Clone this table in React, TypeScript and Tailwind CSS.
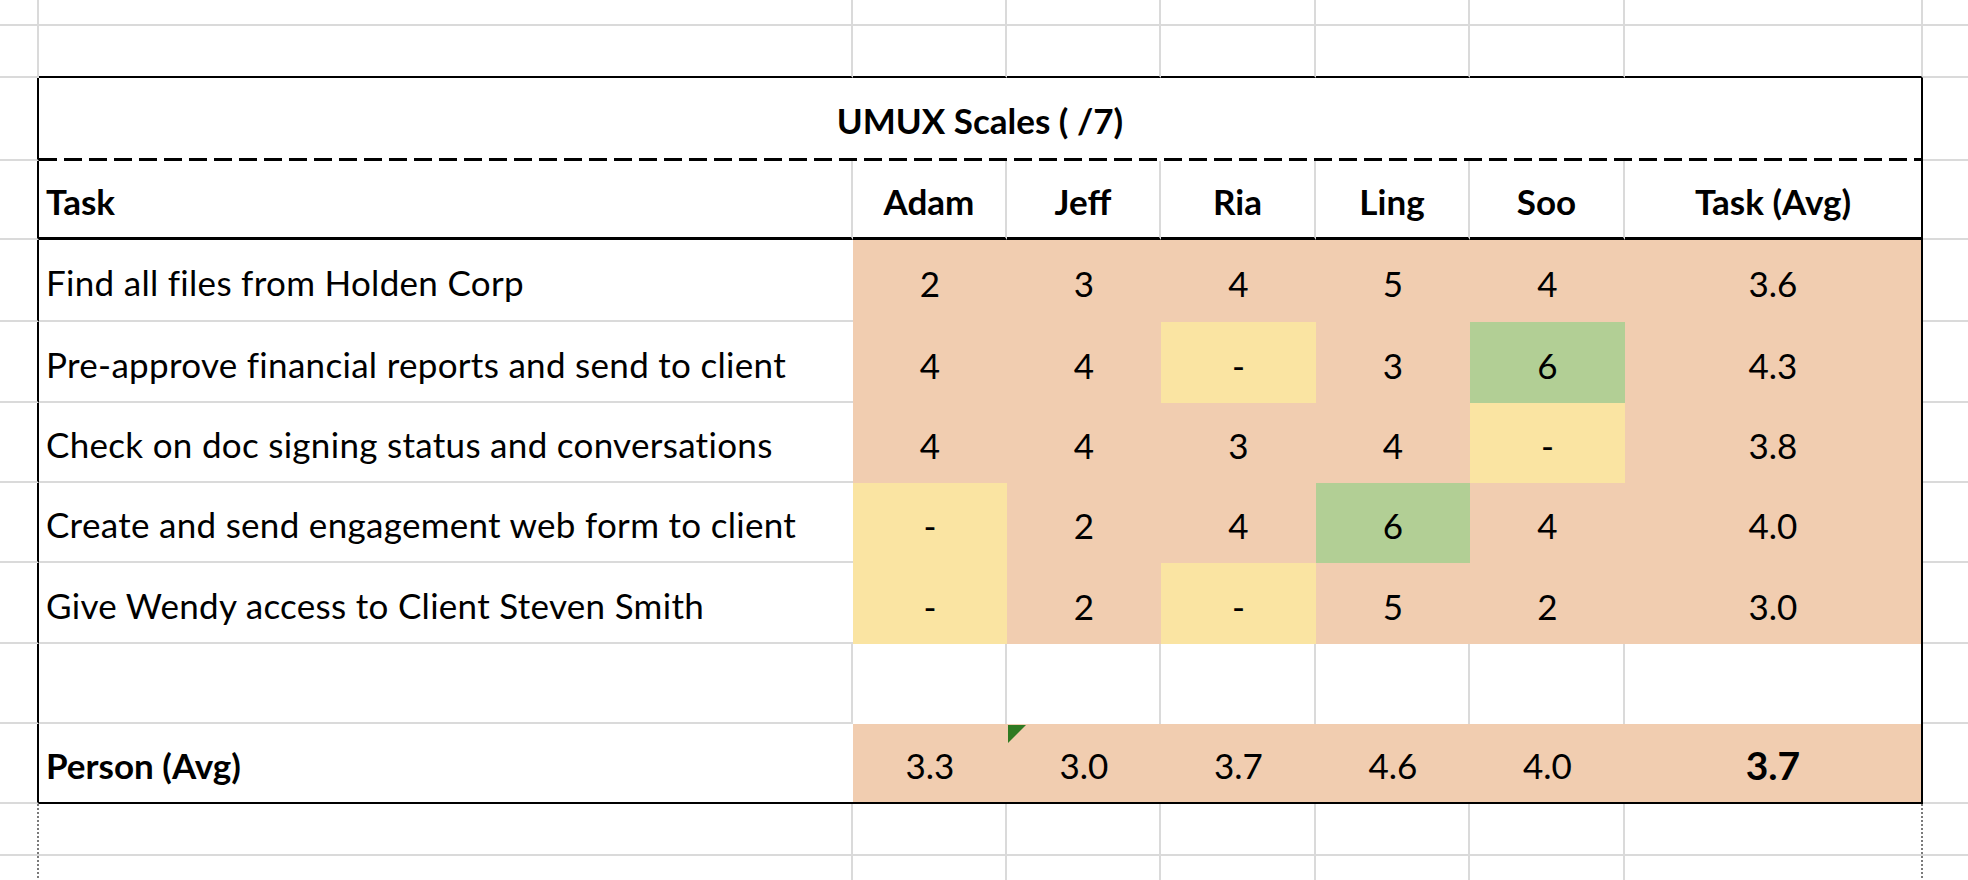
type Fill = "o" | "y" | "g";

const fillBg: Record<Fill, string> = {
  o: "bg-[#f1cdb0]",
  y: "bg-[#fae4a2]",
  g: "bg-[#b2cf95]",
};

const people = ["Adam", "Jeff", "Ria", "Ling", "Soo"];

const tasks: { name: string; scores: string[]; fills: Fill[]; avg: string }[] = [
  { name: "Find all files from Holden Corp", scores: ["2", "3", "4", "5", "4"], fills: ["o", "o", "o", "o", "o"], avg: "3.6" },
  { name: "Pre-approve financial reports and send to client", scores: ["4", "4", "-", "3", "6"], fills: ["o", "o", "y", "o", "g"], avg: "4.3" },
  { name: "Check on doc signing status and conversations", scores: ["4", "4", "3", "4", "-"], fills: ["o", "o", "o", "o", "y"], avg: "3.8" },
  { name: "Create and send engagement web form to client", scores: ["-", "2", "4", "6", "4"], fills: ["y", "o", "o", "g", "o"], avg: "4.0" },
  { name: "Give Wendy access to Client Steven Smith", scores: ["-", "2", "-", "5", "2"], fills: ["y", "o", "y", "o", "o"], avg: "3.0" },
];

const personAvg = ["3.3", "3.0", "3.7", "4.6", "4.0"];

const grid = "border-[#dadada]";

function Cell({ className = "", children }: { className?: string; children?: React.ReactNode }) {
  return <div className={`flex items-center pt-[5px] ${className}`}>{children}</div>;
}

export default function App() {
  return (
    <div className="w-[1968px] h-[880px] overflow-hidden bg-white text-black font-['Lato',sans-serif] text-[35px]">
      <div className="grid grid-cols-[39px_814px_154px_154px_155px_154px_155px_298px_45px] grid-rows-[26px_52px_83px_79px_82px_81px_80px_80px_81px_80px_80px_52px_24px]">
        {/* rows above the table */}
        {Array.from({ length: 8 }).map((_, i) => (
          <div key={`a${i}`} className={`border-r-2 border-b-2 ${grid}`} />
        ))}
        <div className={`border-b-2 ${grid}`} />

        <div className={`border-r-2 border-b-2 ${grid}`} />
        {Array.from({ length: 7 }).map((_, i) => (
          <div key={`b${i}`} className="border-r-2 border-r-[#dadada] border-b-2 border-b-black" />
        ))}
        <div className={`border-b-2 ${grid}`} />

        {/* title */}
        <div className="border-r-2 border-r-black border-b-2 border-b-[#dadada]" />
        <div className="col-span-7 flex flex-col border-r-2 border-r-black">
          <div className="flex-1 flex items-center justify-center pt-[4px] font-bold">UMUX Scales ( /7)</div>
          <div className="h-[3px] bg-[repeating-linear-gradient(90deg,#000_0_18px,transparent_18px_25px)]" />
        </div>
        <div className={`border-b-2 ${grid}`} />

        {/* header */}
        <div className="border-r-2 border-r-black border-b-2 border-b-[#dadada]" />
        <Cell className="pl-[7px] font-bold border-r-2 border-r-[#dadada] border-b-[3px] border-b-black">Task</Cell>
        {people.map((p) => (
          <Cell key={p} className="justify-center font-bold border-r-2 border-r-[#dadada] border-b-[3px] border-b-black">
            {p}
          </Cell>
        ))}
        <Cell className="justify-center font-bold border-r-2 border-r-black border-b-[3px] border-b-black">Task (Avg)</Cell>
        <div className={`border-b-2 ${grid}`} />

        {/* task rows */}
        {tasks.map((t) => (
          <div key={t.name} className="contents">
            <div className="border-r-2 border-r-black border-b-2 border-b-[#dadada]" />
            <Cell className={`pl-[7px] tracking-[0.3px] border-b-2 ${grid}`}>{t.name}</Cell>
            {t.scores.map((s, i) => (
              <Cell key={i} className={`justify-center ${fillBg[t.fills[i]]}`}>
                {s}
              </Cell>
            ))}
            <Cell className="justify-center bg-[#f1cdb0] border-r-2 border-r-black">{t.avg}</Cell>
            <div className={`border-b-2 ${grid}`} />
          </div>
        ))}

        {/* empty row */}
        <div className="border-r-2 border-r-black border-b-2 border-b-[#dadada]" />
        <div className={`border-r-2 border-b-2 ${grid}`} />
        {Array.from({ length: 5 }).map((_, i) => (
          <div key={`e${i}`} className={`border-r-2 ${grid}`} />
        ))}
        <div className="border-r-2 border-r-black" />
        <div className={`border-b-2 ${grid}`} />

        {/* person avg */}
        <div className="border-r-2 border-r-black border-b-2 border-b-[#dadada]" />
        <Cell className="pl-[7px] font-bold border-b-2 border-b-black">Person (Avg)</Cell>
        {personAvg.map((v, i) => (
          <Cell key={i} className="relative justify-center bg-[#f1cdb0] border-b-2 border-b-black">
            {i === 1 && (
              <svg className="absolute left-[1px] top-[1px]" width="18" height="18" viewBox="0 0 18 18">
                <polygon points="0,0 18,0 0,18" fill="#2f7a22" />
              </svg>
            )}
            {v}
          </Cell>
        ))}
        <Cell className="justify-center bg-[#f1cdb0] border-r-2 border-r-black border-b-2 border-b-black font-bold text-[39px]">
          3.7
        </Cell>
        <div className={`border-b-2 ${grid}`} />

        {/* rows below, with the print-area line */}
        {[0, 1].map((r) => (
          <div key={`r${r}`} className="contents">
            <div className={`flex justify-end ${r === 0 ? "border-b-2" : ""} ${grid}`}>
              <div className="w-[2px] bg-[repeating-linear-gradient(180deg,#7a7a7a_0_2px,transparent_2px_4px)]" />
            </div>
            {Array.from({ length: 6 }).map((_, i) => (
              <div key={i} className={`border-r-2 ${r === 0 ? "border-b-2" : ""} ${grid}`} />
            ))}
            <div className={`flex justify-end ${r === 0 ? "border-b-2" : ""} ${grid}`}>
              <div className="w-[2px] bg-[repeating-linear-gradient(180deg,#7a7a7a_0_2px,transparent_2px_4px)]" />
            </div>
            <div className={`${r === 0 ? "border-b-2" : ""} ${grid}`} />
          </div>
        ))}
      </div>
    </div>
  );
}
